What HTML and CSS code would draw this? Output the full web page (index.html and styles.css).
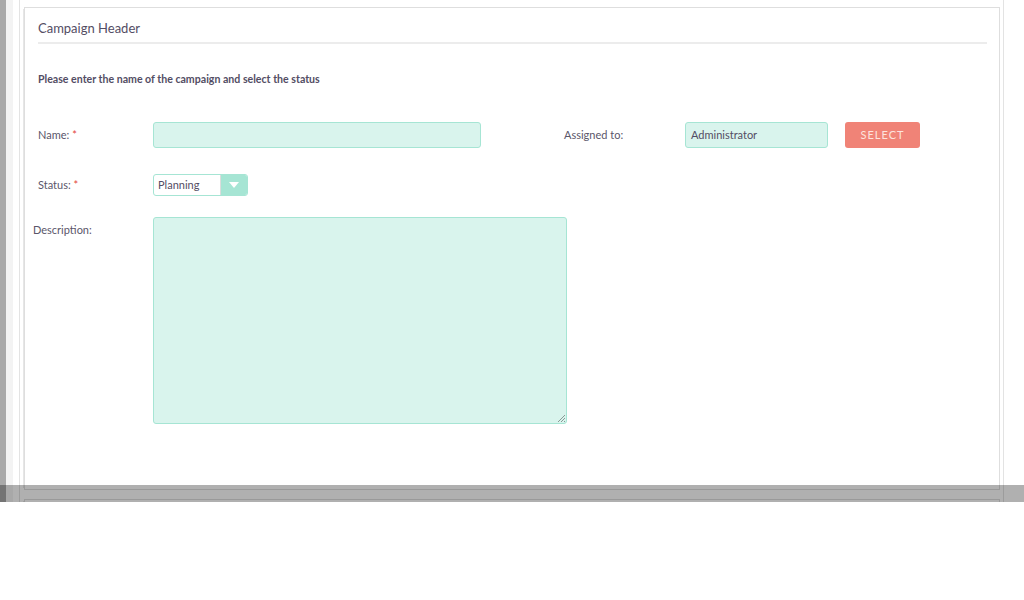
FILE: index.html
```html
<!DOCTYPE html>
<html>
<head>
<meta charset="utf-8">
<link rel="stylesheet" href="styles.css">
</head>
<body>
<div class="screen">
  <div class="shade-strip"></div>
  <div class="page">
    <div class="gutter"></div>
    <div class="main">
      <div class="frame">
        <div class="panel">
          <div class="panel-title">Campaign Header</div>
          <div class="instructions">Please enter the name of the campaign and select the status</div>
          <div class="form-grid">
            <div class="label row1">Name: <span class="req">*</span></div>
            <div class="field row1"><div class="input name-input"></div></div>
            <div class="label row1">Assigned to:</div>
            <div class="field row1 assigned">
              <div class="input assigned-input">Administrator</div>
              <div class="btn">SELECT</div>
            </div>

            <div class="label row2">Status: <span class="req">*</span></div>
            <div class="field row2 span3">
              <div class="select">
                <span class="select-value">Planning</span>
                <span class="select-arrow"><svg width="10" height="6" viewBox="0 0 10 6"><path d="M0 0 L10 0 L5 6 Z" fill="#ffffff"/></svg></span>
              </div>
            </div>

            <div class="label row3 desc-label">Description:</div>
            <div class="field row3 span3">
              <div class="textarea">
                <svg class="grip" width="8" height="8" viewBox="0 0 8 8"><path d="M8 1 L1 8 M8 4 L4 8 M8 7 L7 8" stroke="#8a9a96" stroke-width="1"/></svg>
              </div>
            </div>
          </div>
        </div>
        <div class="panel next"></div>
      </div>
    </div>
  </div>
  <div class="band"></div>
</div>
</body>
</html>
```
FILE: styles.css
```css
* { box-sizing: border-box; }
html, body { margin: 0; padding: 0; background: #ffffff; }
body {
  font-family: Lato, "Open Sans", "Liberation Sans", sans-serif;
  color: #534d64;
  width: 1024px;
  height: 600px;
  overflow: hidden;
}
.screen {
  position: relative;
  display: flex;
  height: 502px;
  overflow: hidden;
}
.shade-strip {
  width: 6px;
  flex: none;
  background: #a9a9a9;
}
.page {
  flex: 1;
  display: flex;
  background: #ffffff;
}
.gutter {
  width: 7px;
  flex: none;
  background: #f3f3f3;
}
.main {
  flex: 1;
  padding-left: 6px;
  padding-right: 20px;
}
.frame {
  height: 100%;
  border-left: 1px solid #e3e3e3;
  border-right: 1px solid #e3e3e3;
  padding: 7px 3px 0 2px;
}
.panel {
  border: 1px solid #dedede;
  box-shadow: -3px 0 0 -2px #e6e6e6;
  height: 483px;
  padding: 0 12px 0 13px;
  margin-left: 2px;
}
.panel.next {
  margin-top: 9px;
  height: 40px;
}
.panel-title {
  font-size: 13px;
  height: 36px;
  padding-top: 12px;
  line-height: 16px;
  border-bottom: 2px solid #ececec;
  color: #534d64;
}
.instructions {
  font-size: 10.6px;
  font-weight: bold;
  margin-top: 28px;
  line-height: 14px;
  color: #534d64;
}
.form-grid {
  display: grid;
  grid-template-columns: 115px 411px 121px 1fr;
  grid-template-rows: auto auto auto;
  margin-top: 36px;
}
.row2 { margin-top: 26px; }
.row3 { margin-top: 21px; }
.label {
  font-size: 11px;
  color: #5a566a;
  line-height: 26px;
}
.label.row2 { line-height: 21px; }
.label.row3 { line-height: 26px; }
.desc-label { margin-left: -5px; }
.req { color: #e3453a; }
.span3 { grid-column: 2 / span 3; }
.input {
  height: 26px;
  background: #d9f4ed;
  border: 1px solid #a6e5d4;
  border-radius: 3px;
  font-size: 11px;
  line-height: 24px;
  padding-left: 5px;
  color: #534d64;
}
.name-input { width: 328px; }
.assigned { display: flex; gap: 17px; }
.assigned-input { width: 143px; }
.btn {
  width: 75px;
  height: 26px;
  background: #f08377;
  border-radius: 3px;
  color: #fde3de;
  font-size: 11px;
  letter-spacing: 1px;
  text-align: center;
  line-height: 26px;
}
.select {
  width: 95px;
  height: 22px;
  display: flex;
  border: 1px solid #a6e5d4;
  border-radius: 3px;
  background: #ffffff;
  overflow: hidden;
}
.select-value {
  flex: 1;
  font-size: 11px;
  line-height: 20px;
  padding-left: 4px;
  border-right: 1px solid #dcdcdc;
}
.select-arrow {
  width: 26px;
  background: #a6e5d4;
  display: flex;
  align-items: center;
  justify-content: center;
}
.textarea {
  position: relative;
  width: 414px;
  height: 207px;
  background: #d9f4ed;
  border: 1px solid #a6e5d4;
  border-radius: 3px;
}
.grip {
  position: absolute;
  right: 1px;
  bottom: 1px;
}
.band {
  position: absolute;
  left: 0;
  right: 0;
  top: 485px;
  height: 17px;
  background: rgba(0, 0, 0, 0.31);
}
```
